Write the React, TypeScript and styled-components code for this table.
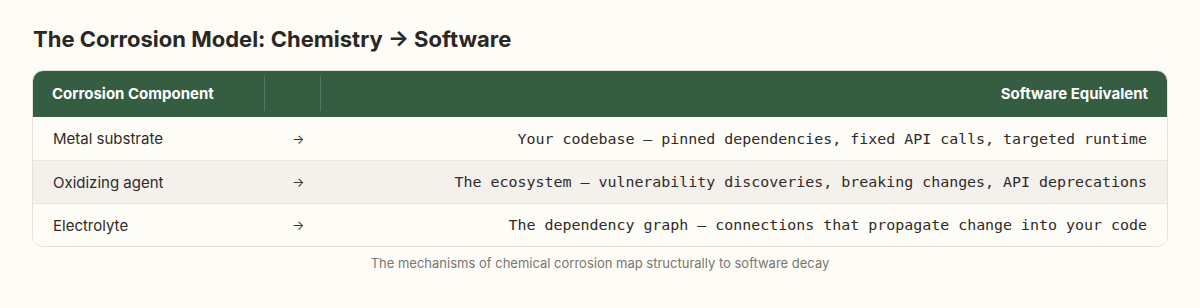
import React from 'react';
import styled, { createGlobalStyle } from 'styled-components';

const GlobalStyle = createGlobalStyle`
  *, *::before, *::after {
    box-sizing: border-box;
  }
  body {
    margin: 0;
    background: #fefcf6;
    font-family: Inter, "Noto Sans", sans-serif;
    color: #2a2724;
  }
`;

const Page = styled.div`
  padding: 24px 32px 0;
`;

const Title = styled.h2`
  margin: 0 0 16px 1px;
  font-size: 22px;
  line-height: 30px;
  font-weight: 700;
  color: #2a2724;
`;

const Table = styled.div`
  border: 1px solid #e6e1da;
  border-radius: 11px;
  overflow: hidden;
`;

const Row = styled.div<{ $striped?: boolean }>`
  display: grid;
  grid-template-columns: 233px 56px 1fr;
  height: 43px;
  align-items: center;
  background: ${(p) => (p.$striped ? '#f4f0ec' : '#fefcf6')};
  & + & {
    border-top: 1px solid #ebe6e0;
  }
`;

const HeadRow = styled.div`
  display: grid;
  grid-template-columns: 233px 56px 1fr;
  height: 47px;
  align-items: center;
  background: #345d42;
  margin: -1px -1px 0;
`;

const HeadCell = styled.div<{ $right?: boolean; $divider?: boolean }>`
  height: 35px;
  display: flex;
  align-items: center;
  justify-content: ${(p) => (p.$right ? 'flex-end' : 'flex-start')};
  padding: 0 20px;
  font-size: 15px;
  font-weight: 700;
  color: #ffffff;
  white-space: nowrap;
  border-right: ${(p) => (p.$divider ? '1px solid rgba(255,255,255,0.16)' : 'none')};
`;

const Cell = styled.div`
  padding: 0 20px;
  font-size: 15px;
  color: #2e2b28;
  white-space: nowrap;
`;

const ArrowCell = styled.div`
  padding-left: 26px;
  font-size: 13px;
  color: #3a3632;
`;

const CodeCell = styled.div`
  padding: 0 20px;
  text-align: right;
  font-family: "DejaVu Sans Mono", "Liberation Mono", monospace;
  font-size: 14.95px;
  color: #2e2b28;
  white-space: nowrap;
`;

const Caption = styled.p`
  margin: 8px 0 0;
  text-align: center;
  font-size: 13px;
  color: #7a756f;
`;

const rows = [
  {
    part: 'Metal substrate',
    equiv: 'Your codebase — pinned dependencies, fixed API calls, targeted runtime',
  },
  {
    part: 'Oxidizing agent',
    equiv: 'The ecosystem — vulnerability discoveries, breaking changes, API deprecations',
  },
  {
    part: 'Electrolyte',
    equiv: 'The dependency graph — connections that propagate change into your code',
  },
];

export default function App() {
  return (
    <>
      <GlobalStyle />
      <Page>
        <Title>The Corrosion Model: Chemistry → Software</Title>
        <Table>
          <HeadRow>
            <HeadCell $divider>Corrosion Component</HeadCell>
            <HeadCell $divider />
            <HeadCell $right>Software Equivalent</HeadCell>
          </HeadRow>
          {rows.map((r, i) => (
            <Row key={r.part} $striped={i === 1}>
              <Cell>{r.part}</Cell>
              <ArrowCell>→</ArrowCell>
              <CodeCell>{r.equiv}</CodeCell>
            </Row>
          ))}
        </Table>
        <Caption>The mechanisms of chemical corrosion map structurally to software decay</Caption>
      </Page>
    </>
  );
}
